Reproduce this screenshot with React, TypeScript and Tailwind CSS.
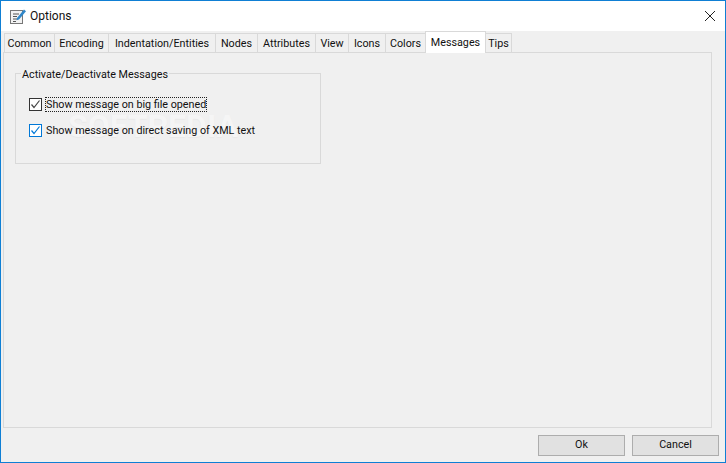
const tabs = [
  { label: "Common", w: "w-[51px]" },
  { label: "Encoding", w: "w-[55px]" },
  { label: "Indentation/Entities", w: "w-[108px]" },
  { label: "Nodes", w: "w-[43px]" },
  { label: "Attributes", w: "w-[59px]" },
  { label: "View", w: "w-[34px]" },
  { label: "Icons", w: "w-[38px]" },
  { label: "Colors", w: "w-[41px]" },
];

function OptionsIcon() {
  return (
    <svg width="18" height="18" viewBox="0 0 18 18" className="block">
      <rect x="1.5" y="3.5" width="12" height="13" fill="#f2f2f2" stroke="#777777" />
      <path d="M4 7h6M4 9.5h4M4 12h5M4 14.5h3" stroke="#555555" strokeWidth="1" />
      <path d="M8 11L15 2.5l2 1.7-7 8.3-2.5.8z" fill="#2f86c8" />
    </svg>
  );
}

function Check({ blue }: { blue?: boolean }) {
  return (
    <span
      className={`flex h-[13px] w-[13px] shrink-0 items-center justify-center border bg-white ${
        blue ? "border-[#0078d7]" : "border-[#333333]"
      }`}
    >
      <svg width="11" height="11" viewBox="0 0 11 11">
        <path d="M1.5 5.5L4 8.5L9.5 1.5" fill="none" stroke={blue ? "#0078d7" : "#444444"} strokeWidth="1.2" />
      </svg>
    </span>
  );
}

export default function App() {
  return (
    <div className="flex h-[463px] w-[726px] flex-col overflow-hidden border border-[#0f7fd4] bg-[#f0f0f0] font-['Roboto','Liberation_Sans',sans-serif] text-[10.75px] text-[#111111]">
      <div className="flex h-[30px] shrink-0 items-center bg-white pl-[8px] pr-[9px]">
        <OptionsIcon />
        <span className="ml-[3px] text-[12px]">Options</span>
        <svg width="12" height="12" viewBox="0 0 12 12" className="ml-auto">
          <path d="M1 1l10 10M11 1L1 11" stroke="#222222" strokeWidth="1" />
        </svg>
      </div>
      <div className="flex h-[21px] shrink-0 items-end pl-[3px]">
        {tabs.map((t) => (
          <div
            key={t.label}
            className={`-mr-px flex h-[19px] ${t.w} items-center justify-center border border-b-0 border-[#d9d9d9] bg-[#f0f0f0] pt-[2px] whitespace-nowrap`}
          >
            {t.label}
          </div>
        ))}
        <div className="relative z-10 -mb-px -mr-px flex h-[22px] w-[61px] items-start justify-center border border-b-0 border-[#d9d9d9] bg-white pt-[3px]">
          Messages
        </div>
        <div className="flex h-[19px] w-[27px] items-center justify-center border border-b-0 border-[#d9d9d9] pt-[2px]">
          Tips
        </div>
      </div>
      <div className="ml-[2px] mr-[13px] h-[376px] border border-[#d9d9d9] pl-[11px] pt-[13px]">
        <fieldset className="relative h-[98px] w-[306px] border border-[#d9d9d9] pl-[13px]">
          <legend className="-ml-[8px] h-[14px] px-[1px] pt-[2px] leading-[14px]">Activate/Deactivate Messages</legend>
          <span className="pointer-events-none absolute left-[52px] top-[28px] text-[32px] leading-[36px] font-bold text-[#f5f5f5] [text-shadow:0_1px_1px_#e8e8e8]">
            SOFTPEDIA
          </span>
          <div className="relative mt-[17px] flex h-[15px] items-center gap-[3px]">
            <Check />
            <span className="border border-dotted border-[#222222] leading-[13px]">
              Show message on big file opened
            </span>
          </div>
          <div className="relative mt-[11px] flex h-[15px] items-center gap-[3px]">
            <Check blue />
            <span className="px-[1px] leading-[13px]">Show message on direct saving of XML text</span>
          </div>
        </fieldset>
      </div>
      <div className="flex flex-1 items-center justify-end gap-[7px] pr-[6px]">
        <button className="h-[21px] w-[87px] border border-[#adadad] bg-[#e1e1e1]">Ok</button>
        <button className="h-[21px] w-[87px] border border-[#adadad] bg-[#e1e1e1]">Cancel</button>
      </div>
    </div>
  );
}
